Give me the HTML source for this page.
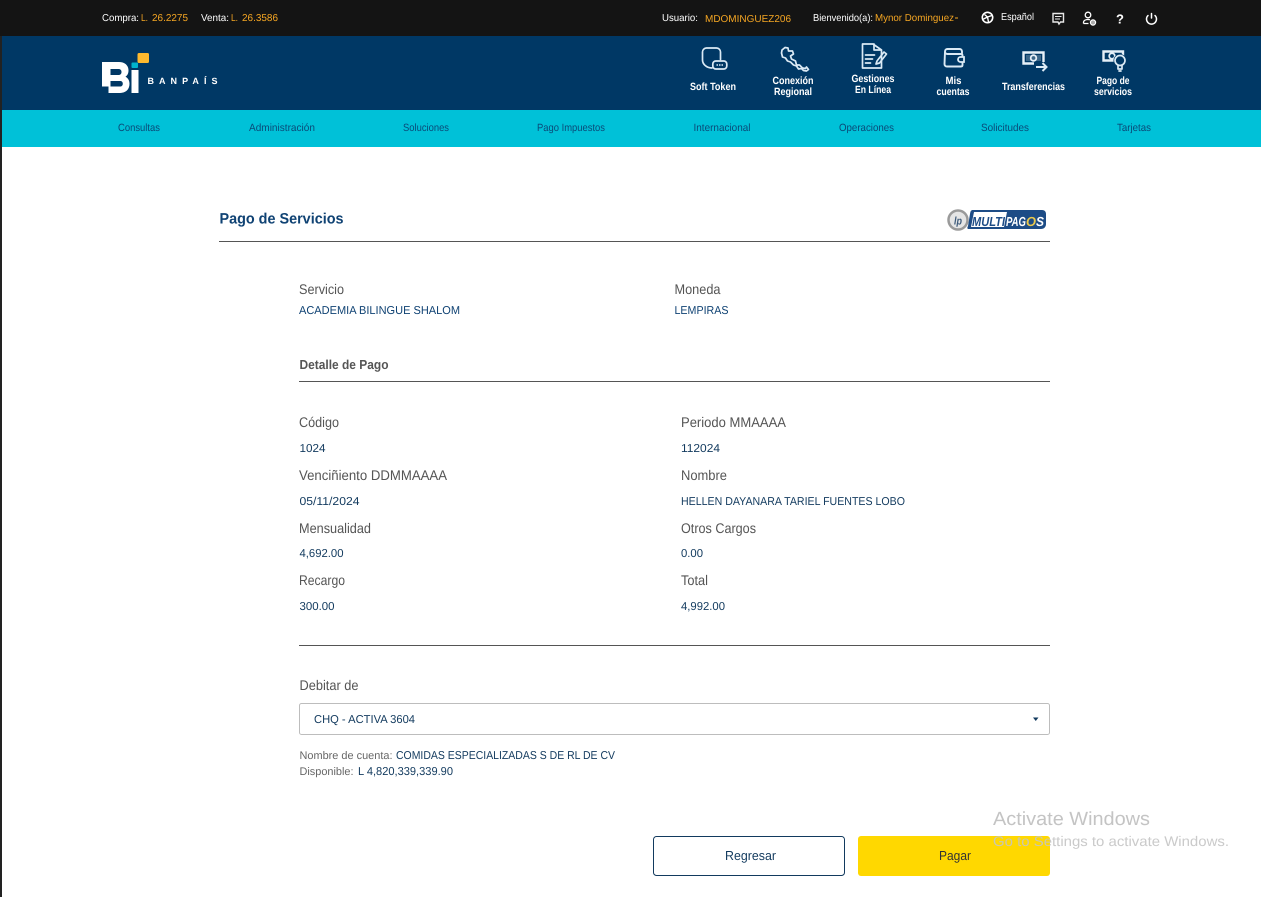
<!DOCTYPE html>
<html lang="es">
<head>
<meta charset="utf-8">
<title>Pago de Servicios</title>
<style>
html,body{margin:0;padding:0;background:#fff;width:1261px;height:897px;overflow:hidden}
svg{position:absolute;left:0;top:0;display:block}
text{font-family:"Liberation Sans",sans-serif}
.w{fill:#fff}.o{fill:#f5a623}
.lb{fill:#555;font-size:14px}
.v{fill:#0f4273;font-size:11.5px}
.v2{fill:#123a5e;font-size:11.5px}
.n{fill:#0a4a78;font-size:10.5px}
.ic{fill:#fff;font-size:10.5px;font-weight:bold}
.s{fill:none;stroke:#dbeaf5;stroke-width:1.7;stroke-linecap:round;stroke-linejoin:round}
</style>
</head>
<body>
<svg width="1261" height="897" viewBox="0 0 1261 897" xmlns="http://www.w3.org/2000/svg" text-rendering="geometricPrecision">
<rect width="1261" height="897" fill="#fff"/>
<rect x="0" y="0" width="2" height="897" fill="#222"/>
<rect x="0" y="0" width="1261" height="36" fill="#141414"/>
<rect x="2" y="36" width="1259" height="74" fill="#003865"/>
<rect x="2" y="110" width="1259" height="37" fill="#00c1d8"/>

<!-- top bar -->
<text x="102" y="21" class="w" font-size="10" textLength="37" lengthAdjust="spacingAndGlyphs">Compra:</text>
<text x="141" y="21" class="o" font-size="10" textLength="7" lengthAdjust="spacingAndGlyphs">L.</text>
<text x="152" y="21" class="o" font-size="10" textLength="36" lengthAdjust="spacingAndGlyphs">26.2275</text>
<text x="201" y="21" class="w" font-size="10" textLength="28" lengthAdjust="spacingAndGlyphs">Venta:</text>
<text x="231" y="21" class="o" font-size="10" textLength="7" lengthAdjust="spacingAndGlyphs">L.</text>
<text x="242" y="21" class="o" font-size="10" textLength="36" lengthAdjust="spacingAndGlyphs">26.3586</text>
<text x="662" y="21" class="w" font-size="10" textLength="36" lengthAdjust="spacingAndGlyphs">Usuario:</text>
<text x="705" y="22" class="o" font-size="10" textLength="86" lengthAdjust="spacingAndGlyphs">MDOMINGUEZ206</text>
<text x="813" y="21" class="w" font-size="10" textLength="60" lengthAdjust="spacingAndGlyphs">Bienvenido(a):</text>
<text x="875" y="21" class="o" font-size="10" textLength="79" lengthAdjust="spacingAndGlyphs">Mynor Dominguez</text>
<rect x="955" y="17.5" width="3" height="1" fill="#f5a623"/>
<text x="1001" y="20" class="w" font-size="10" textLength="33" lengthAdjust="spacingAndGlyphs">Español</text>

<!-- top icons -->
<circle cx="987.5" cy="17.5" r="5.2" fill="none" stroke="#fff" stroke-width="1.6"/>
<path d="M984.500 14.500l3 2.500 4.500-1.500M987.500 17l1 5M987.500 17l-4 2" fill="none" stroke="#fff" stroke-width="1.4"/>
<path d="M1053 13.500h10.500v8.500h-3l-1.500 2-1-2h-5z" fill="none" stroke="#e8e8e8" stroke-width="1.400"/>
<path d="M1055 16.500h6.500M1055 19h5" stroke="#e8e8e8" stroke-width="1"/>
<circle cx="1088" cy="15" r="2.800" fill="none" stroke="#fff" stroke-width="1.300"/>
<path d="M1083.500 23.500v-1c0-2 2-3 4.500-3 1 0 1.500.1 2 .3M1083.500 23.500h5" fill="none" stroke="#fff" stroke-width="1.300"/>
<circle cx="1093" cy="22.500" r="2.600" fill="#aaa" stroke="#fff" stroke-width="1.200"/>
<text x="1116" y="23.500" fill="#fff" font-size="13" font-weight="bold">?</text>
<path d="M1148 15.500a5 5 0 1 0 7 0" fill="none" stroke="#fff" stroke-width="1.500" stroke-linecap="round"/>
<path d="M1151.500 13.500v4.500" stroke="#fff" stroke-width="1.500" stroke-linecap="round"/>

<!-- logo -->
<rect x="137.500" y="53" width="11.500" height="10" rx="1.500" fill="#fdb92e"/>
<rect x="131.500" y="62.500" width="6.500" height="5.500" rx="1" fill="#00b4cc"/>
<path d="M102 62h17c6 0 9.500 3.500 9.500 8.500 0 3-1.200 5-3 6.200 2.300 1.200 4 3.500 4 7 0 5.500-3.500 9.300-9.500 9.300H108.500v-6.500H102zM110.500 69v6h8c2 0 3-1.300 3-3s-1-3-3-3zM110.500 81v5.500h9.500c1.800 0 2.800-1.100 2.800-2.800s-1-2.700-2.800-2.700z" fill="#fff" fill-rule="evenodd"/>
<rect x="131.500" y="70" width="7" height="23" fill="#fff"/>
<text x="147.500" y="84" fill="#fff" font-size="9" font-weight="bold" textLength="70" lengthAdjust="spacing">BANPAÍS</text>

<!-- header icons -->
<path class="s" d="M720.500 59.500V52a4 4 0 0 0-4-4h-10a4 4 0 0 0-4 4v8c0 4 4 8 9.500 8"/>
<rect class="s" x="712.800" y="61" width="14" height="8" rx="3" fill="#003865"/>
<path d="M716.500 65h6.500" stroke="#dbeaf5" stroke-width="1.500" stroke-dasharray="1.500 1"/>
<path class="s" d="M782 50l3-2.500 3 .5.500 3h4l1 3-3 2 1 3 4 2 1 4h3l3 3 3 .5 1-1.500 2 2.500-2 1.500-3-.5-2-2-3 .5-2-3-3-1-3-3-3-1-2-3-3-1-1-4z"/>
<path class="s" d="M873 44h-10.500v24h19v-18z"/>
<path class="s" d="M874 44v6h7M865.500 55h9M865.500 59h7M865.500 63h5"/>
<path class="s" d="M876 64l1 -3 7-9 2.500 2-7 9z" fill="#003865"/>
<path d="M945 51.500c0-1.500 1-2.500 2.500-2.500h12c1.500 0 2.500 1 2.500 2.500v2M945 51.500c0 1.500 1 2.500 2.500 2.500H961c1 0 1.500.5 1.500 1.500V65c0 1-.5 1.500-1.500 1.500h-14c-1.500 0-2.500-1-2.500-2.500z" fill="none" stroke="#dbeaf5" stroke-width="1.900" stroke-linejoin="round"/>
<path d="M964 57h-3.500a2.500 2.500 0 0 0 0 5h3.500z" fill="#003865" stroke="#dbeaf5" stroke-width="1.800"/>
<path d="M1023.500 52.500h20v11h-20z" fill="none" stroke="#e6f0f8" stroke-width="2.400"/>
<rect x="1026" y="55" width="15" height="6" fill="#e6f0f8" opacity=".25"/>
<circle cx="1033.500" cy="58" r="2.800" fill="none" stroke="#e6f0f8" stroke-width="1.800"/>
<rect x="1034" y="62" width="14" height="11" fill="#003865"/>
<path d="M1036 67h10M1042.500 63l4 4-4 4" fill="none" style="stroke:#dbeaf5;stroke-width:2"/>
<path d="M1103.500 51.500h19.500v9h-19.500z" fill="none" stroke="#e6f0f8" stroke-width="2.400"/>
<circle cx="1112" cy="56" r="2.800" fill="none" stroke="#e6f0f8" stroke-width="1.800"/>
<circle cx="1120" cy="60.500" r="6.500" fill="#003865"/>
<circle class="s" cx="1120" cy="60.500" r="5"/>
<path class="s" d="M1118 65.500v3.500h4v-3.500M1119 71h2"/>

<!-- header labels -->
<text x="690" y="90" class="ic" textLength="46" lengthAdjust="spacingAndGlyphs">Soft Token</text>
<text x="772.500" y="84" class="ic" textLength="41" lengthAdjust="spacingAndGlyphs">Conexión</text>
<text x="774" y="95" class="ic" textLength="38" lengthAdjust="spacingAndGlyphs">Regional</text>
<text x="851.500" y="82" class="ic" textLength="43" lengthAdjust="spacingAndGlyphs">Gestiones</text>
<text x="855" y="93" class="ic" textLength="36" lengthAdjust="spacingAndGlyphs">En Línea</text>
<text x="945.500" y="84" class="ic" textLength="16" lengthAdjust="spacingAndGlyphs">Mis</text>
<text x="936.500" y="95" class="ic" textLength="33" lengthAdjust="spacingAndGlyphs">cuentas</text>
<text x="1002" y="90" class="ic" textLength="63" lengthAdjust="spacingAndGlyphs">Transferencias</text>
<text x="1096.500" y="84" class="ic" textLength="33" lengthAdjust="spacingAndGlyphs">Pago de</text>
<text x="1094" y="95" class="ic" textLength="38" lengthAdjust="spacingAndGlyphs">servicios</text>

<!-- nav -->
<text x="118" y="131" class="n" textLength="42" lengthAdjust="spacingAndGlyphs">Consultas</text>
<text x="249" y="131" class="n" textLength="66" lengthAdjust="spacingAndGlyphs">Administración</text>
<text x="403" y="131" class="n" textLength="46" lengthAdjust="spacingAndGlyphs">Soluciones</text>
<text x="537" y="131" class="n" textLength="68" lengthAdjust="spacingAndGlyphs">Pago Impuestos</text>
<text x="693.500" y="131" class="n" textLength="57" lengthAdjust="spacingAndGlyphs">Internacional</text>
<text x="839" y="131" class="n" textLength="55" lengthAdjust="spacingAndGlyphs">Operaciones</text>
<text x="981" y="131" class="n" textLength="48" lengthAdjust="spacingAndGlyphs">Solicitudes</text>
<text x="1117" y="131" class="n" textLength="34" lengthAdjust="spacingAndGlyphs">Tarjetas</text>

<!-- title -->
<text x="219.500" y="223.500" fill="#0f4273" font-size="15" font-weight="bold" textLength="124" lengthAdjust="spacingAndGlyphs">Pago de Servicios</text>
<rect x="219" y="241" width="831" height="1" fill="#555"/>

<!-- multipagos -->
<circle cx="958" cy="220" r="9.500" fill="#e5e5e5" stroke="#9a9a9a" stroke-width="2.500"/>
<text x="954" y="224.500" fill="#3d5a7a" font-size="11" font-weight="bold" font-style="italic" textLength="8" lengthAdjust="spacingAndGlyphs">lp</text>
<path d="M973 210h69c3 0 4 2 4 4v10c0 3-2 5-5 5h-72c-2 0-2-1-1-3l2-12c.500-3 1-4 3-4z" fill="#1d4c86"/>
<path d="M974 212h33l-3 15h-33z" fill="#fff"/>
<text x="972" y="226" fill="#1d4c86" font-size="13" font-weight="bold" font-style="italic" textLength="33" lengthAdjust="spacingAndGlyphs">MULTI</text>
<text x="1006" y="226" fill="#fff" font-size="13" font-weight="bold" font-style="italic" textLength="20" lengthAdjust="spacingAndGlyphs">PAG</text>
<text x="1026" y="226" fill="#e9c84c" font-size="13" font-weight="bold" font-style="italic" textLength="10" lengthAdjust="spacingAndGlyphs">O</text>
<text x="1036" y="226" fill="#fff" font-size="13" font-weight="bold" font-style="italic" textLength="8" lengthAdjust="spacingAndGlyphs">S</text>

<!-- service -->
<text x="299" y="294" class="lb" textLength="45" lengthAdjust="spacingAndGlyphs">Servicio</text>
<text x="299" y="314" class="v" textLength="161" lengthAdjust="spacingAndGlyphs">ACADEMIA BILINGUE SHALOM</text>
<text x="674.500" y="294" class="lb" textLength="46" lengthAdjust="spacingAndGlyphs">Moneda</text>
<text x="674.500" y="314" class="v" textLength="54" lengthAdjust="spacingAndGlyphs">LEMPIRAS</text>

<text x="299.500" y="369" fill="#555" font-size="13" font-weight="bold" textLength="89" lengthAdjust="spacingAndGlyphs">Detalle de Pago</text>
<rect x="299" y="381" width="751" height="1" fill="#555"/>

<!-- details -->
<text x="299" y="427" class="lb" textLength="40" lengthAdjust="spacingAndGlyphs">Código</text>
<text x="299.500" y="452" class="v2" textLength="26" lengthAdjust="spacingAndGlyphs">1024</text>
<text x="681" y="427" class="lb" textLength="105" lengthAdjust="spacingAndGlyphs">Periodo MMAAAA</text>
<text x="681" y="452" class="v2" textLength="39" lengthAdjust="spacingAndGlyphs">112024</text>

<text x="299" y="480" class="lb" textLength="148" lengthAdjust="spacingAndGlyphs">Venciñiento DDMMAAAA</text>
<text x="299.500" y="505" class="v2" textLength="60" lengthAdjust="spacingAndGlyphs">05/11/2024</text>
<text x="681" y="480" class="lb" textLength="46" lengthAdjust="spacingAndGlyphs">Nombre</text>
<text x="681" y="505" class="v2" textLength="224" lengthAdjust="spacingAndGlyphs">HELLEN DAYANARA TARIEL FUENTES LOBO</text>

<text x="299" y="533" class="lb" textLength="72" lengthAdjust="spacingAndGlyphs">Mensualidad</text>
<text x="299.500" y="557" class="v2" textLength="44" lengthAdjust="spacingAndGlyphs">4,692.00</text>
<text x="681" y="533" class="lb" textLength="75" lengthAdjust="spacingAndGlyphs">Otros Cargos</text>
<text x="681" y="557" class="v2" textLength="22" lengthAdjust="spacingAndGlyphs">0.00</text>

<text x="299" y="585" class="lb" textLength="46" lengthAdjust="spacingAndGlyphs">Recargo</text>
<text x="299.500" y="610" class="v2" textLength="35" lengthAdjust="spacingAndGlyphs">300.00</text>
<text x="681" y="585" class="lb" textLength="27" lengthAdjust="spacingAndGlyphs">Total</text>
<text x="681" y="610" class="v2" textLength="44" lengthAdjust="spacingAndGlyphs">4,992.00</text>

<rect x="299" y="645" width="751" height="1" fill="#555"/>

<!-- debit -->
<text x="299.500" y="690" class="lb" textLength="59" lengthAdjust="spacingAndGlyphs">Debitar de</text>
<rect x="299.500" y="703.500" width="750" height="31" rx="2" fill="#fff" stroke="#bdbdbd"/>
<text x="314" y="723" class="v2" textLength="101" lengthAdjust="spacingAndGlyphs">CHQ - ACTIVA 3604</text>
<path d="M1033 717.500h5.500l-2.750 3.500z" fill="#123a5e"/>
<text x="299.500" y="759" fill="#666" font-size="11" textLength="93" lengthAdjust="spacingAndGlyphs">Nombre de cuenta:</text>
<text x="396" y="759" class="v2" textLength="219" lengthAdjust="spacingAndGlyphs">COMIDAS ESPECIALIZADAS S DE RL DE CV</text>
<text x="299.500" y="775" fill="#666" font-size="11" textLength="54" lengthAdjust="spacingAndGlyphs">Disponible:</text>
<text x="358" y="775" class="v2" textLength="95" lengthAdjust="spacingAndGlyphs">L 4,820,339,339.90</text>

<!-- buttons -->
<rect x="653.500" y="836.500" width="191" height="39" rx="3" fill="#fff" stroke="#123a5e"/>
<text x="725" y="860" fill="#123a5e" font-size="13" textLength="51" lengthAdjust="spacingAndGlyphs">Regresar</text>
<rect x="858" y="836" width="192" height="40" rx="3" fill="#ffd800"/>
<text x="939" y="860" fill="#333" font-size="13" textLength="32" lengthAdjust="spacingAndGlyphs">Pagar</text>

<!-- watermark -->
<text x="993" y="825" fill="#c4c4c4" font-size="19" textLength="157" lengthAdjust="spacingAndGlyphs">Activate Windows</text>
<text x="993" y="846" fill="#c4c4c4" fill-opacity=".9" font-size="14" textLength="236" lengthAdjust="spacingAndGlyphs">Go to Settings to activate Windows.</text>
</svg>
</body>
</html>
